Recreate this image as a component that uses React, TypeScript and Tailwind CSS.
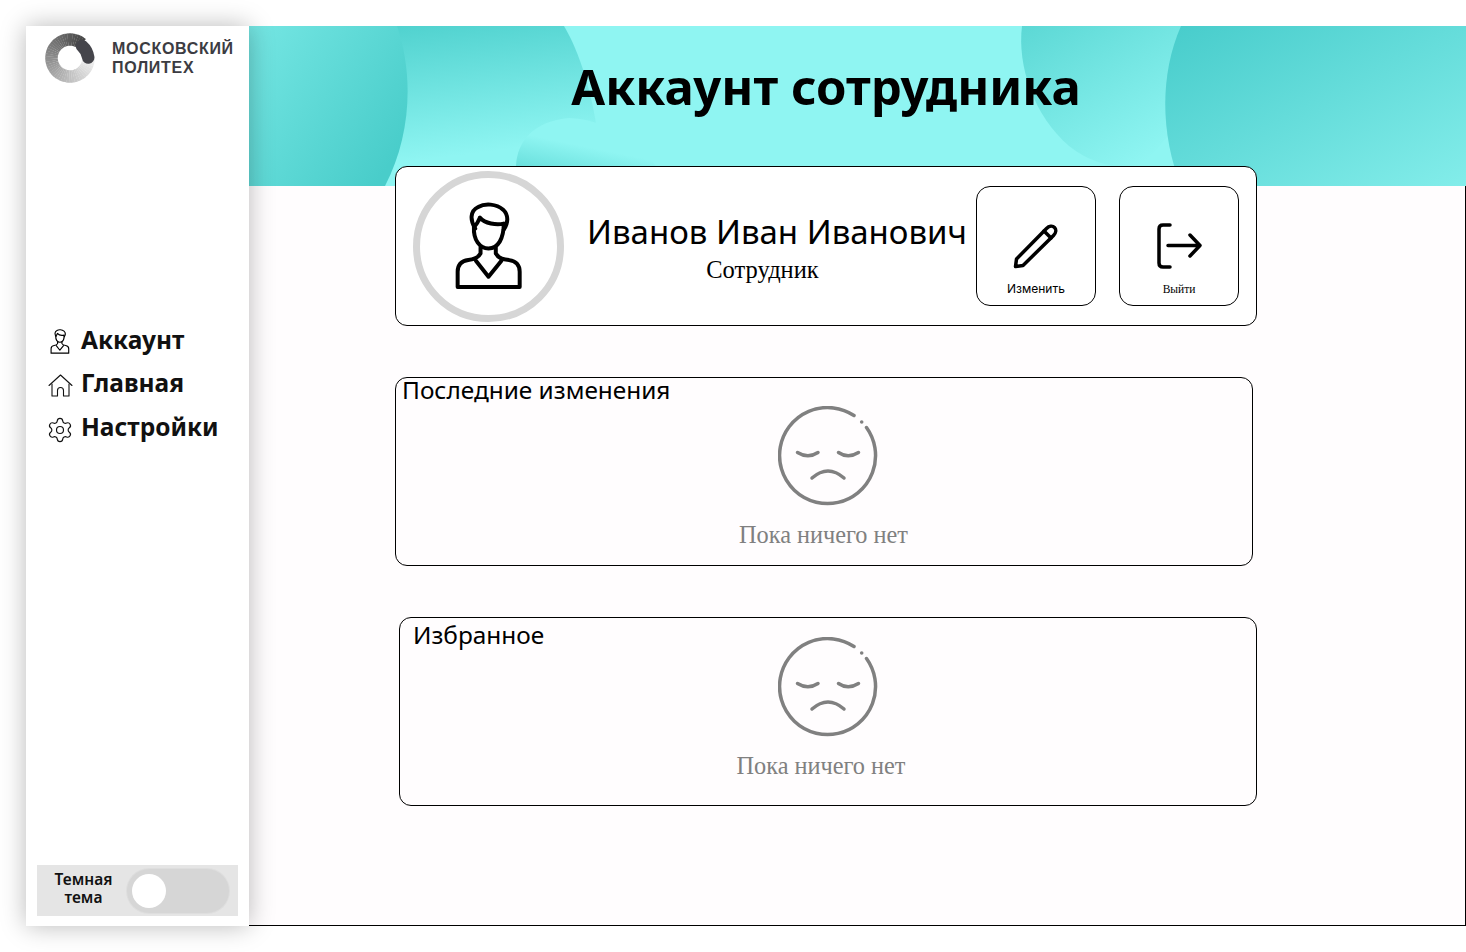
import { Settings } from "lucide-react"

const sans = "font-['Noto_Sans','Open_Sans',sans-serif]"
const serif = "font-['Liberation_Serif',serif]"

function LogoRing() {
  // the ring fades from dark at the top right to almost white at the bottom right
  const steps = Array.from({ length: 48 }, (_, i) => i)
  const cx = 25
  const cy = 25
  const r = 18.5
  return (
    <svg width="50" height="50" viewBox="0 0 50 50">
      {steps.map((i) => {
        const a0 = (-50 - i * 6.6) * (Math.PI / 180)
        const a1 = (-50 - (i + 1.1) * 6.6) * (Math.PI / 180)
        const shade = Math.round(70 + (i / 47) * 175)
        return (
          <path
            key={i}
            d={`M${cx + r * Math.cos(a0)} ${cy + r * Math.sin(a0)} A${r} ${r} 0 0 0 ${cx + r * Math.cos(a1)} ${cy + r * Math.sin(a1)}`}
            fill="none"
            stroke={`rgb(${shade},${shade},${shade})`}
            strokeWidth="12.5"
          />
        )
      })}
      <path d="M37 13 A18.5 18.5 0 0 1 43.2 24.5" fill="none" stroke="#45454b" strokeWidth="12.5" strokeLinecap="round" />
    </svg>
  )
}

function PersonIcon({ width, height, sw }: { width: number; height: number; sw: number }) {
  return (
    <svg width={width} height={height} viewBox="195 125 205 265" fill="none" stroke="#000" strokeWidth={sw} strokeLinejoin="round" strokeLinecap="round">
      <path d="M256 205C240 180 240 152 265 140C285 128 320 130 340 148C358 165 355 190 342 208" />
      <path d="M252 200C250 240 270 265 296 265C325 265 342 235 342 190C320 195 285 190 270 172C265 185 258 195 252 200Z" />
      <path d="M272 262V280C265 295 250 298 235 300C215 303 203 315 203 335V381H390V335C390 315 378 303 358 300C340 298 325 295 318 280V262" />
      <path d="M258 302L296 350L335 302" />
    </svg>
  )
}

function HomeIcon() {
  return (
    <svg width="25" height="23" viewBox="0 0 25 23" fill="none" stroke="#111" strokeWidth="1.1" strokeLinecap="round" strokeLinejoin="round">
      <path d="M1 11.5L12.5 1L24 11.5" />
      <path d="M4 10V22H9.5V16.5C9.5 12.5 15.5 12.5 15.5 16.5V22H21V10" />
    </svg>
  )
}

function PencilIcon() {
  return (
    <svg width="46" height="46" viewBox="0 0 46 46" fill="none" stroke="#000" strokeWidth="3.5" strokeLinejoin="round" strokeLinecap="round">
      <path d="M2.5 43.5L3.5 36L33.5 5.5C36 3 39.5 2.5 41.5 4.5C43.5 6.5 43 10 40.5 12.5L10 42.5Z" />
      <path d="M31 8L38 15" />
    </svg>
  )
}

function ExitIcon() {
  return (
    <svg width="46" height="46" viewBox="0 0 46 46" fill="none" stroke="#000" strokeWidth="3.5" strokeLinecap="round" strokeLinejoin="round">
      <path d="M14 2H7C4.5 2 3 3.5 3 6V40C3 42.5 4.5 44 7 44H14" />
      <path d="M12 22.5H44M34 12L44 22.5L34 33" />
    </svg>
  )
}

function SadFace() {
  return (
    <svg width="100" height="100" viewBox="0 0 100 100" fill="none" stroke="#808080" strokeWidth="3.5" strokeLinecap="round">
      <path d="M88.5 21.5A48 48 0 1 1 76 9.5" />
      <circle cx="83.7" cy="16" r="1.8" fill="#808080" stroke="none" />
      <path d="M19.5 46.5Q30 53 40 46.5" />
      <path d="M60.5 46.5Q70 53 80.5 46.5" />
      <path d="M34 72Q50 58 66 72" />
    </svg>
  )
}

function BannerShapes() {
  return (
    <svg className="absolute inset-0" width="1217" height="160" viewBox="0 0 1217 160">
      <defs>
        <linearGradient id="blobLeft" x1="0" y1="0" x2="1" y2="0.7">
          <stop offset="0" stopColor="#75e6e3" />
          <stop offset="1" stopColor="#49cdca" />
        </linearGradient>
        <linearGradient id="blobTop" x1="0" y1="0" x2="0.15" y2="0.85">
          <stop offset="0" stopColor="#4fd1ce" />
          <stop offset="1" stopColor="#8ff5f2" />
        </linearGradient>
        <linearGradient id="blobSmall" x1="0" y1="1" x2="0.3" y2="0.35">
          <stop offset="0" stopColor="#53d3d0" />
          <stop offset="1" stopColor="#8ff5f2" />
        </linearGradient>
        <linearGradient id="blobMid" x1="0" y1="0" x2="0.7" y2="0.9">
          <stop offset="0" stopColor="#5cd8d5" />
          <stop offset="1" stopColor="#8ff5f2" />
        </linearGradient>
        <linearGradient id="blobRight" x1="0" y1="0" x2="1" y2="1">
          <stop offset="0" stopColor="#47cccb" />
          <stop offset="1" stopColor="#83edea" />
        </linearGradient>
      </defs>
      <rect width="1217" height="160" fill="#8ff5f2" />
      <path d="M130 0C120 30 122 80 135 115C145 140 165 160 185 160H350V120C345 70 330 25 315 0Z" fill="url(#blobTop)" />
      <path d="M0 0H148C165 50 162 110 136 160H0Z" fill="url(#blobLeft)" />
      <path d="M267 140C268 115 285 95 320 92C370 95 400 125 420 160H267Z" fill="url(#blobSmall)" />
      <path d="M773 0C768 40 785 90 820 120C840 136 860 140 890 145L960 60L940 0Z" fill="url(#blobMid)" />
      <path d="M932 0H1217V160H932C912 110 910 50 932 0Z" fill="url(#blobRight)" />
    </svg>
  )
}

function EmptyState({ shift, faceShift }: { shift: string; faceShift: string }) {
  return (
    <div className={`flex flex-col items-center ${shift}`}>
      <div className={faceShift}>
        <SadFace />
      </div>
      <p className={`mt-[14px] text-[24.3px] leading-[30px] whitespace-nowrap text-[#808080] ${serif}`}>Пока ничего нет</p>
    </div>
  )
}

export default function App() {
  return (
    <div className={`flex h-[952px] w-[1466px] overflow-hidden bg-white pt-[26px] pl-[26px] ${sans}`}>
      <aside className="relative z-10 flex h-[900px] w-[223px] shrink-0 flex-col bg-white shadow-[0_0_24px_rgba(0,0,0,0.28)]">
        <div className="ml-[19px] mt-[7px] flex items-center gap-[17px]">
          <LogoRing />
          <div className="font-['Liberation_Sans',sans-serif] text-[16px] leading-[19px] font-bold tracking-[0.7px] text-[#3c3c42] uppercase">
            <div>московский</div>
            <div>политех</div>
          </div>
        </div>

        <nav className="mt-[240px] flex flex-col gap-[10px] pl-[22px] text-[24.5px] leading-[33px] font-bold text-[#111]">
          <div className="flex items-center">
            <div className="mt-[4px] flex w-[33px] justify-center pr-[9px]">
              <PersonIcon width={20} height={25} sw={12} />
            </div>
            Аккаунт
          </div>
          <div className="flex items-center">
            <div className="mt-[6px] flex w-[33px] justify-start">
              <HomeIcon />
            </div>
            Главная
          </div>
          <div className="flex items-center">
            <div className="mt-[4px] flex w-[33px] justify-start">
              <Settings size={28} strokeWidth={1} color="#111" className="-ml-[2px] mt-[3px]" />
            </div>
            Настройки
          </div>
        </nav>

        <div className="mx-[11px] mb-[10px] mt-auto flex h-[51px] items-center bg-[#e5e5e5] pr-[9px]">
          <div className="-mt-[5px] w-[92px] pl-[1px] text-center text-[15.5px] leading-[18px] font-semibold text-[#111]">Темная тема</div>
          <div className="-ml-[2px] flex h-[44px] w-[102px] items-center rounded-full bg-[#d6d6d6] pl-[5px] ring-1 ring-[#dedede]">
            <div className="h-[34px] w-[34px] rounded-full bg-white" />
          </div>
        </div>
      </aside>

      <main className="flex h-[900px] flex-1 flex-col border-b border-r border-black bg-[#fffdfe]">
        <header className="relative -mr-px flex h-[160px] shrink-0 justify-center pr-[63px]">
          <BannerShapes />
          <h1 className="relative mt-[27px] text-[49px] leading-[66px] font-bold text-black">Аккаунт сотрудника</h1>
        </header>

        <div className="relative -mt-5 flex flex-col pl-[146px]">
          <section className="flex h-[160px] w-[862px] items-center rounded-[12px] border border-black bg-white pl-[17px] pr-[17px]">
            <div className="h-[151px] w-[151px] shrink-0 rounded-full border-[7px] border-[#d6d6d6] flex items-center justify-center">
              <PersonIcon width={68} height={88} sw={12} />
            </div>
            <div className="ml-[23px] mt-[3px] flex w-[380px] shrink-0 flex-col items-center">
              <div className="text-[33px] leading-[44px] whitespace-nowrap text-black">Иванов Иван Иванович</div>
              <div className={`-ml-[29px] mt-[1px] text-[24.5px] leading-[30px] text-black ${serif}`}>Сотрудник</div>
            </div>
            <div className="ml-auto flex gap-[23px]">
              <div className="flex h-[120px] w-[120px] flex-col items-center rounded-[14px] border border-black pt-[36px]">
                <PencilIcon />
                <span className="mt-[12px] font-['Inter',sans-serif] text-[12px] leading-[16px] text-black">Изменить</span>
              </div>
              <div className="flex h-[120px] w-[120px] flex-col items-center rounded-[14px] border border-black pt-[36px]">
                <ExitIcon />
                <span className={`mt-[12px] text-[11.5px] leading-[16px] text-black ${serif}`}>Выйти</span>
              </div>
            </div>
          </section>

          <section className="mt-[51px] h-[189px] w-[858px] rounded-[12px] border border-black pl-[6px]">
            <h2 className="-mt-[1px] text-[24.4px] leading-[26px] text-black">Последние изменения</h2>
            <EmptyState shift="-ml-[7px] mt-[3px]" faceShift="ml-[9px]" />
          </section>

          <section className="ml-[4px] mt-[51px] h-[189px] w-[858px] rounded-[12px] border border-black pl-[13px] pt-[4px]">
            <h2 className="text-[24.4px] leading-[26px] text-black">Избранное</h2>
            <EmptyState shift="-ml-[27px] mt-[-11px]" faceShift="ml-[14px]" />
          </section>
        </div>
      </main>
    </div>
  )
}
